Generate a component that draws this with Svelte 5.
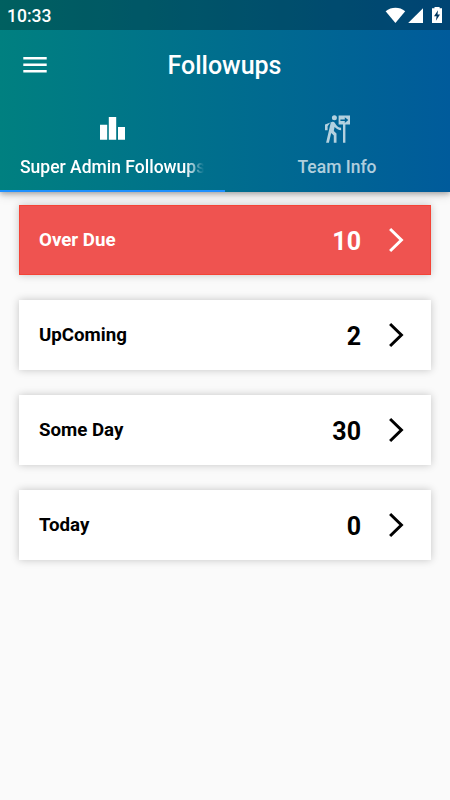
<script>
	let followups = [
		{ title: 'Over Due', count: 10, overdue: true },
		{ title: 'UpComing', count: 2 },
		{ title: 'Some Day', count: 30 },
		{ title: 'Today', count: 0 }
	];
	let activeTab = 0;
</script>

<div class="screen">
	<header>
		<div class="status">
			<span>10:33</span>
			<svg width="60" height="20" viewBox="0 0 60 20" fill="#fff">
				<path d="M.6 5.2C6.5.6 14.5.6 20.2 5.2L10.4 17Z" />
				<path d="M38 2.3V17H23.2Z" />
				<path d="M49.5 2.2V1H54.6V2.2H57V17H47V2.2Z" />
				<path d="M53 4.2L49 10.2H51.6L50.9 14.7L55 8.6H52.5Z" fill="#00365f" />
			</svg>
		</div>

		<div class="appbar">
			<button class="menu" aria-label="Menu">
				<svg width="24" height="17" viewBox="0 0 24 17" fill="#fff">
					<path d="M.3 0h23.4v2.6H.3zM.3 6.5h23.4v2.6H.3zM.3 13h23.4v2.6H.3z" />
				</svg>
			</button>
			<h1>Followups</h1>
		</div>

		<div class="tabs">
			<button class="tab" class:active={activeTab === 0} on:click={() => (activeTab = 0)}>
				<svg width="29" height="30" viewBox="0 0 29 30" fill="currentColor">
					<path d="M2 10.7h7.2V25.8H2zM10.8 3h7.4V25.8h-7.4zM20 13h7V25.8h-7z" />
				</svg>
				<span class="label fade">Super Admin Followups</span>
			</button>
			<button class="tab" class:active={activeTab === 1} on:click={() => (activeTab = 1)}>
				<svg width="29" height="30" viewBox="0 0 29 30" fill="currentColor">
					<circle cx="11.4" cy="3.8" r="2.5" />
					<path d="M8 7.5L3.1 28.7h2.8l2.3-9.6 2.6 2.4v7.2h2.7v-9.2l-2.7-2.6.8-3.9c1.8 2 4 3.2 6.5 3.3v-2.6c-2.1 0-3.9-1.1-4.9-2.7l-1.3-2c-.7-1.1-1.9-1.4-3.1-.9L2 10.5v5.8h2.6v-4.1z" />
					<path fill-rule="evenodd" d="M15.6 1.6H27v9h-4.6v18.1H20V10.6h-4.4zM17.4 5.4v1.5h4.4V9l3.5-2.9-3.5-2.9v2.2z" />
				</svg>
				<span class="label">Team Info</span>
			</button>
		</div>
	</header>

	<main>
		{#each followups as item}
			<div class="card" class:overdue={item.overdue}>
				<span class="title">{item.title}</span>
				<span class="count">{item.count}</span>
				<svg width="18" height="28" viewBox="0 0 18 28" fill="none" stroke="currentColor" stroke-width="3">
					<path d="M2.1 3L13.4 14L2.1 25" />
				</svg>
			</div>
		{/each}
	</main>
</div>

<style>
	:global(body) {
		margin: 0;
	}

	.screen {
		height: 800px;
		background: #fafafa;
		font-family: Roboto, sans-serif;
		overflow: hidden;
	}

	button {
		padding: 0;
		border: none;
		background: none;
		font-family: inherit;
		cursor: pointer;
	}

	svg {
		display: block;
	}

	header {
		position: relative;
		height: 192px;
		color: white;
		background: linear-gradient(90deg, #008080, #005b9b);
		box-shadow: 0 2px 5px rgba(0, 0, 0, 0.28), 0 4px 10px rgba(0, 0, 0, 0.1);
	}

	.status {
		display: flex;
		align-items: center;
		justify-content: space-between;
		box-sizing: border-box;
		height: 30px;
		padding: 1px 8px 0 7px;
		background: rgba(0, 0, 0, 0.25);
		font-size: 17.5px;
		font-weight: 500;
	}

	.status svg {
		margin-right: -3px;
	}

	.appbar {
		display: grid;
		grid-template-columns: 70px 1fr 71px;
		align-items: center;
		height: 71px;
	}

	.menu {
		justify-self: center;
	}

	h1 {
		margin: 0;
		font-size: 25px;
		font-weight: 500;
		line-height: 30px;
		text-align: center;
	}

	.tabs {
		display: flex;
		height: 91px;
	}

	.tab {
		display: flex;
		flex: 1;
		flex-direction: column;
		align-items: center;
		box-sizing: border-box;
		min-width: 0;
		padding: 13px 21px 0 20px;
		border-bottom: 2px solid transparent;
		color: rgba(255, 255, 255, 0.7);
	}

	.tab.active {
		border-bottom-color: #1e90ff;
		color: white;
	}

	.label {
		max-width: 100%;
		margin-top: 12px;
		overflow: hidden;
		font-size: 17.5px;
		font-weight: 500;
		line-height: 22px;
		white-space: nowrap;
	}

	.fade {
		mask-image: linear-gradient(90deg, #000 calc(100% - 18px), transparent);
	}

	main {
		display: flex;
		flex-direction: column;
		gap: 25px;
		padding: 13px 19px;
	}

	.card {
		display: flex;
		align-items: center;
		box-sizing: border-box;
		height: 70px;
		padding: 0 25px 0 20px;
		background: white;
		color: black;
		box-shadow: 0 0 8px rgba(0, 0, 0, 0.22);
	}

	.card.overdue {
		border: 1px solid #f44336;
		padding: 0 24px 0 19px;
		background: #ef5350;
		color: white;
	}

	.title {
		flex: 1;
		font-size: 18.7px;
		font-weight: 700;
	}

	.count {
		margin-right: 27px;
		padding-top: 2px;
		font-size: 25px;
		font-weight: 700;
	}
</style>
